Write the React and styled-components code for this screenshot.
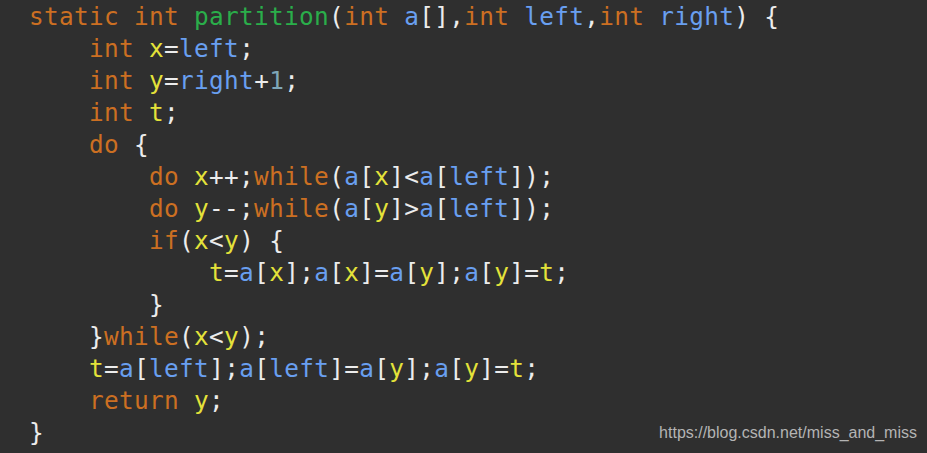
import React from "react";
import styled, { createGlobalStyle } from "styled-components";

const Global = createGlobalStyle`
  html, body { margin: 0; padding: 0; background: #2f2f2f; }
  body { width: 927px; height: 453px; overflow: hidden; }
`;

const Frame = styled.div`
  position: relative;
  width: 927px;
  height: 453px;
  background: #2f2f2f;
  overflow: hidden;
`;

const Code = styled.pre`
  margin: 0;
  padding: 1px 0 0 29px;
  font-family: "DejaVu Sans Mono", "Liberation Mono", monospace;
  font-size: 24.4px;
  letter-spacing: 0.32px;
  line-height: 32px;
  color: #ececec;
  white-space: pre;
`;

const colors = {
  k: "#cc6f22",
  f: "#2aae4a",
  i: "#699ff0",
  v: "#e4e23a",
  n: "#7fa7b8",
  p: "#ececec",
};

const Tok = styled.span`
  color: ${(p) => colors[p.$t]};
`;

const Watermark = styled.div`
  position: absolute;
  right: 10px;
  bottom: 11px;
  font-family: "Liberation Sans", Arial, sans-serif;
  font-size: 16px;
  line-height: 18px;
  color: #b4b4b4;
`;

// token helpers: [type, text]
const K = (s) => ["k", s];
const F = (s) => ["f", s];
const I = (s) => ["i", s];
const V = (s) => ["v", s];
const N = (s) => ["n", s];
const P = (s) => ["p", s];

const lines = [
  [K("static int "), F("partition"), P("("), K("int "), I("a"), P("[],"), K("int "), I("left"), P(","), K("int "), I("right"), P(") {")],
  [P("    "), K("int "), V("x"), P("="), I("left"), P(";")],
  [P("    "), K("int "), V("y"), P("="), I("right"), P("+"), N("1"), P(";")],
  [P("    "), K("int "), V("t"), P(";")],
  [P("    "), K("do "), P("{")],
  [P("        "), K("do "), V("x"), P("++;"), K("while"), P("("), I("a"), P("["), V("x"), P("]<"), I("a"), P("["), I("left"), P("]);")],
  [P("        "), K("do "), V("y"), P("--;"), K("while"), P("("), I("a"), P("["), V("y"), P("]>"), I("a"), P("["), I("left"), P("]);")],
  [P("        "), K("if"), P("("), V("x"), P("<"), V("y"), P(") {")],
  [P("            "), V("t"), P("="), I("a"), P("["), V("x"), P("];"), I("a"), P("["), V("x"), P("]="), I("a"), P("["), V("y"), P("];"), I("a"), P("["), V("y"), P("]="), V("t"), P(";")],
  [P("        }")],
  [P("    }"), K("while"), P("("), V("x"), P("<"), V("y"), P(");")],
  [P("    "), V("t"), P("="), I("a"), P("["), I("left"), P("];"), I("a"), P("["), I("left"), P("]="), I("a"), P("["), V("y"), P("];"), I("a"), P("["), V("y"), P("]="), V("t"), P(";")],
  [P("    "), K("return "), V("y"), P(";")],
  [P("}")],
];

export default function App() {
  return (
    <>
      <Global />
      <Frame>
        <Code>
          {lines.map((line, li) => (
            <React.Fragment key={li}>
              {line.map(([t, s], ti) => (
                <Tok key={ti} $t={t}>{s}</Tok>
              ))}
              {li < lines.length - 1 ? "\n" : null}
            </React.Fragment>
          ))}
        </Code>
        <Watermark>https://blog.csdn.net/miss_and_miss</Watermark>
      </Frame>
    </>
  );
}
